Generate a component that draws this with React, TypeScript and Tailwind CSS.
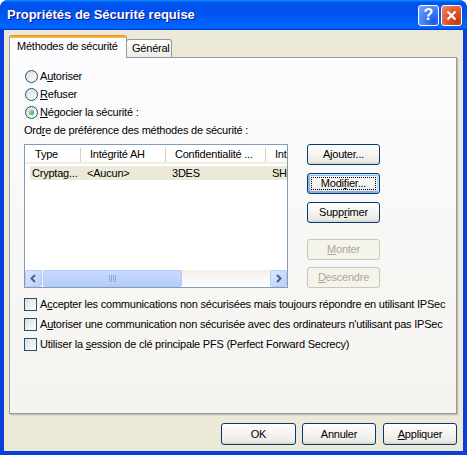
import React from 'react';

const btnBase =
  'relative flex items-center justify-center rounded-[3px] border border-[#003c74] bg-[linear-gradient(180deg,#fff,#ecebe6_86%,#d6d0c5)]';
const btnDisabled =
  'relative flex items-center justify-center rounded-[3px] border border-[#c9c7ba] bg-[#f5f4ea] text-[#aca899]';

const Button = ({
  children,
  size,
  disabled,
  focused,
}: {
  children: React.ReactNode;
  size: string;
  disabled?: boolean;
  focused?: boolean;
}) => (
  <div
    className={`${disabled ? btnDisabled : btnBase} ${size} ${
      focused
        ? 'shadow-[inset_-1px_1px_#cee7ff,inset_1px_2px_#98b8ea,inset_-2px_2px_#bcd4f6,inset_1px_-1px_#89ade4,inset_2px_-2px_#89ade4]'
        : ''
    }`}
  >
    {focused && <span className="absolute inset-[3px] border border-dotted border-black" />}
    <span>{children}</span>
  </div>
);

const Radio = ({ checked, children }: { checked?: boolean; children: React.ReactNode }) => (
  <div className="flex items-center h-[18px]">
    <span className="ml-px flex items-center justify-center w-[13px] h-[13px] rounded-full border border-[#1c5180] bg-[linear-gradient(135deg,#dcdcd7,#fff)]">
      {checked && (
        <span className="w-[5px] h-[5px] rounded-full bg-[radial-gradient(circle_at_35%_35%,#9be38f,#21a121)]" />
      )}
    </span>
    <span className="ml-[2px]">{children}</span>
  </div>
);

const Check = ({ children }: { children: React.ReactNode }) => (
  <div className="flex items-center h-[20px]">
    <span className="w-[13px] h-[13px] border border-[#1c5180] bg-[linear-gradient(135deg,#dcdcd7,#fff)]" />
    <span className="ml-[3px]">{children}</span>
  </div>
);

const Arrow = ({ dir }: { dir: 'l' | 'r' }) => (
  <div className="w-[17px] h-[17px] rounded-[2px] border border-[#b7caf5] bg-[linear-gradient(135deg,#dce7fe,#b9cffb)] flex items-center justify-center">
    <svg width="9" height="9" viewBox="0 0 9 9">
      <path
        d={dir === 'l' ? 'M6 1 L2.5 4.5 L6 8' : 'M3 1 L6.5 4.5 L3 8'}
        fill="none"
        stroke="#4d6185"
        strokeWidth="2"
      />
    </svg>
  </div>
);

const Separator = () => <div className="self-center w-px h-[14px] bg-[#d6d2c2]" />;

export default function App() {
  return (
    <div className="w-[467px] h-[455px] flex flex-col rounded-t-[8px] overflow-hidden bg-[#0a3fdc] font-['Liberation_Sans',Arial,sans-serif] text-[11px] tracking-[-0.22px] text-black">
      {/* title bar */}
      <div className="h-[30px] shrink-0 flex items-center pl-[7px] pr-[5px] bg-[linear-gradient(180deg,#0997ff,#0053ee_8%,#0050ee_40%,#06f_88%,#06f_93%,#005bff_95%,#003dd7_96%,#003dd7)]">
        <span className="flex-1 text-white font-bold text-[13px] tracking-normal [text-shadow:1px_1px_#0f1089]">
          Propriétés de Sécurité requise
        </span>
        <div className="w-[21px] h-[21px] rounded-[3px] border border-white bg-[radial-gradient(circle_at_80%_80%,#1f55e8,#4f85f7_60%,#7aa6fa)] flex items-center justify-center text-white font-bold text-[16px] tracking-normal">
          ?
        </div>
        <div className="ml-[2px] w-[21px] h-[21px] rounded-[3px] border border-white bg-[radial-gradient(circle_at_80%_80%,#c4380f,#e25b32_55%,#f08a6c)] flex items-center justify-center">
          <svg width="11" height="11" viewBox="0 0 11 11">
            <path d="M1.5 1.5 L9.5 9.5 M9.5 1.5 L1.5 9.5" stroke="#fff" strokeWidth="2.2" />
          </svg>
        </div>
      </div>

      {/* client area */}
      <div className="flex-1 mx-[4px] mb-[4px] bg-[#ece9d8] pt-[5px] pl-[5px] pr-[6px] flex flex-col">
        {/* tabs */}
        <div className="flex items-end h-[22px]">
          <div className="relative z-10 w-[118px] h-[23px] -mb-px flex flex-col rounded-t-[3px] overflow-hidden border-x border-[#919b9c] bg-[#fcfcfe]">
            <div className="h-[3px] shrink-0 bg-[linear-gradient(180deg,#e68b2c,#ffc73c)]" />
            <div className="flex-1 flex items-center pl-[7px] pb-[3px]">Méthodes de sécurité</div>
          </div>
          <div className="-ml-px w-[46px] h-[18px] flex items-center pl-[5px] rounded-t-[3px] border-x border-t border-[#919b9c] bg-[linear-gradient(180deg,#fff,#ecebe6)]">
            Général
          </div>
        </div>

        {/* tab panel */}
        <div className="h-[357px] flex flex-col pt-[9px] pl-[14px] border border-[#919b9c] bg-[linear-gradient(180deg,#fcfcfe,#f4f3ee)] shadow-[1px_1px_0_#c5c2b2,2px_2px_0_#dedbcc]">
          <Radio>
            A<u>u</u>toriser
          </Radio>
          <Radio>
            <u>R</u>efuser
          </Radio>
          <Radio checked>
            <u>N</u>égocier la sécurité :
          </Radio>

          <div className="mt-[2px] h-[14px] flex items-center">
            Ord<u>r</u>e de préférence des méthodes de sécurité :
          </div>

          <div className="mt-[7px] flex">
            {/* list view */}
            <div className="w-[264px] h-[144px] border border-[#7f9db9] bg-white flex flex-col overflow-hidden">
              <div className="h-[19px] shrink-0 flex bg-[linear-gradient(180deg,#fff_80%,#ebe9dc)]">
                <div className="w-[55px] flex items-center pl-[10px]">Type</div>
                <Separator />
                <div className="w-[84px] flex items-center pl-[9px]">Intégrité AH</div>
                <Separator />
                <div className="w-[99px] flex items-center pl-[9px]">Confidentialité ...</div>
                <Separator />
                <div className="flex-1 flex items-center pl-[9px]">Int</div>
              </div>
              <div className="mt-[2px] ml-[5px] h-[14px] flex bg-[#ece9d8] whitespace-nowrap">
                <div className="w-[50px] shrink-0 pl-[2px] flex items-center">Cryptag...</div>
                <div className="w-[85px] shrink-0 pl-[7px] flex items-center">&lt;Aucun&gt;</div>
                <div className="w-[100px] shrink-0 pl-[7px] flex items-center">3DES</div>
                <div className="shrink-0 pl-[7px] flex items-center">SH</div>
              </div>
              <div className="flex-1" />
              {/* horizontal scrollbar */}
              <div className="h-[17px] shrink-0 flex bg-[linear-gradient(180deg,#f3f1ec,#fefefb)]">
                <Arrow dir="l" />
                <div className="ml-px w-[139px] h-[17px] rounded-[2px] border border-[#b7caf5] bg-[linear-gradient(180deg,#cad9fd,#b6cdfb)] flex items-center justify-center">
                  <div className="flex gap-px h-[7px]">
                    <span className="w-px bg-[#8aa8ed]" />
                    <span className="w-px bg-[#8aa8ed]" />
                    <span className="w-px bg-[#8aa8ed]" />
                    <span className="w-px bg-[#8aa8ed]" />
                  </div>
                </div>
                <div className="flex-1" />
                <Arrow dir="r" />
              </div>
            </div>

            {/* side buttons */}
            <div className="ml-[19px] flex flex-col">
              <Button size="w-[73px] h-[21px]">
                A<u>j</u>outer...
              </Button>
              <div className="mt-[8px]">
                <Button size="w-[73px] h-[21px]" focused>
                  Modi<u>f</u>ier...
                </Button>
              </div>
              <div className="mt-[8px]">
                <Button size="w-[73px] h-[21px]">
                  Supp<u>r</u>imer
                </Button>
              </div>
              <div className="mt-[16px]">
                <Button size="w-[73px] h-[21px]" disabled>
                  <u>M</u>onter
                </Button>
              </div>
              <div className="mt-[7px]">
                <Button size="w-[73px] h-[21px]" disabled>
                  <u>D</u>escendre
                </Button>
              </div>
            </div>
          </div>

          <div className="mt-[6px] flex flex-col">
            <Check>
              A<u>c</u>cepter les communications non sécurisées mais toujours répondre en utilisant IPSec
            </Check>
            <Check>
              A<u>u</u>toriser une communication non sécurisée avec des ordinateurs n'utilisant pas IPSec
            </Check>
            <Check>
              Utiliser la <u>s</u>ession de clé principale PFS (Perfect Forward Secrecy)
            </Check>
          </div>
        </div>

        {/* dialog buttons */}
        <div className="mt-[9px] flex justify-end gap-[6px]">
          <Button size="w-[75px] h-[22px]">OK</Button>
          <Button size="w-[74px] h-[22px]">Annuler</Button>
          <div className="ml-px">
            <Button size="w-[74px] h-[22px]">
              <u>A</u>ppliquer
            </Button>
          </div>
        </div>
      </div>
    </div>
  );
}
